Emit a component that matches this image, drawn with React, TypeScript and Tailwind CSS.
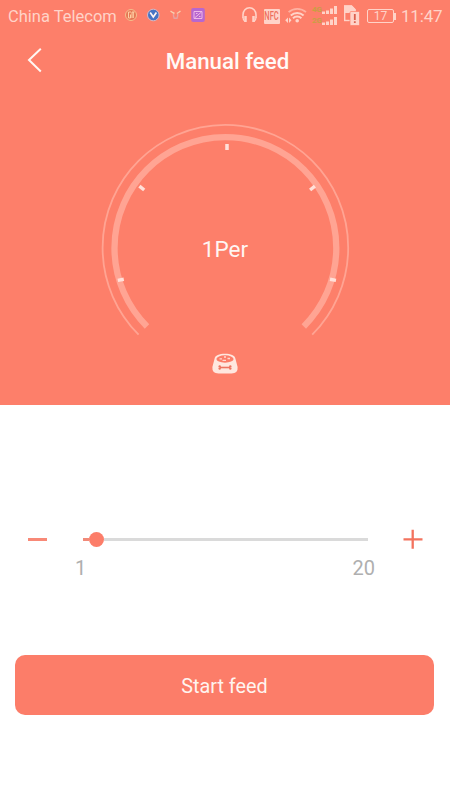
import React from "react";

function StatusBar() {
  return (
    <div className="flex h-8 items-center pl-2 text-[#ffd3c8]">
      <span className="w-[117px] shrink-0 whitespace-nowrap pt-px text-[16.5px] leading-8">China Telecom</span>
      <svg className="shrink-0" width="12" height="32" viewBox="0 0 12 32" fill="none">
        <circle cx="6" cy="15" r="5.5" fill="#e57755" stroke="#f5bf8d" />
        <path d="M6 12H3.5V18H5.5V14.5M7 18V12H9.5M8.3 12V18" stroke="#ffd0a4" />
      </svg>
      <svg className="ml-[10px] shrink-0" width="13" height="32" viewBox="0 0 13 32" fill="none">
        <circle cx="6.3" cy="15" r="5.8" fill="#4674c4" stroke="#d4b9c6" />
        <path d="M3.2 12.5L6.3 17L9.4 12.5" stroke="#fff5f1" strokeWidth="1.7" />
      </svg>
      <svg className="ml-[10px] shrink-0" width="12" height="32" viewBox="0 0 12 32" fill="none">
        <path d="M.5 11L2.5 12.5L4.5 13.5M10.5 11L8.5 12.5L6.8 13.5" stroke="#f8cfae" strokeWidth="1.4" />
        <path d="M3.5 14V16L4.2 18.3H7L7.7 16V14" stroke="#e7a2a0" strokeWidth="1.4" />
      </svg>
      <svg className="ml-[9px] shrink-0" width="14" height="32" viewBox="0 0 14 32" fill="none">
        <rect x=".2" y="8" width="13.6" height="14" rx="2" fill="#b767cf" />
        <path d="M3 11.5H11V18.5H3ZM3.5 18L10.5 12M5 13.5H6.5M8 16.5H9.5" stroke="#efb8e7" />
      </svg>
      <svg className="ml-[36px] shrink-0" width="17" height="32" viewBox="0 0 17 32" fill="none" stroke="currentColor">
        <path d="M2 18V14.8A6 6.5 0 0 1 15 14.8V18" strokeWidth="1.6" />
        <path d="M4.5 16V22M12.5 16V22" strokeWidth="2.5" />
        <path d="M2 17.5Q2 20 4 21.5M15 17.5Q15 20 13 21.5" strokeWidth="1.3" />
      </svg>
      <span className="ml-[6px] flex h-[15px] w-[16px] shrink-0 items-center justify-center rounded-[1px] bg-[#ffd3c8] text-[#ee6f5c]">
        <span className="scale-x-[.68] scale-y-110 text-[11px] font-medium leading-none">NFC</span>
      </span>
      <svg className="ml-[5px] shrink-0" width="23" height="32" viewBox="0 0 23 32" fill="none" stroke="currentColor">
        <path d="M3.6 12.2A13 13 0 0 1 21 12.2" strokeWidth="1.8" opacity=".6" />
        <path d="M5.8 15.4A9.5 9.5 0 0 1 18.6 15.4M8 18.2A6 6 0 0 1 16.4 18.2" strokeWidth="2" />
        <circle cx="12.2" cy="20.8" r="1.8" fill="currentColor" stroke="none" />
        <path d="M.2 20.3L3 17.6V23ZM4 17.6V23L6.5 20.3Z" fill="currentColor" stroke="none" />
      </svg>
      <div className="ml-[4px] flex w-[26px] shrink-0 flex-col">
        <div className="flex h-[11px] items-start">
          <span className="w-[10px] text-[8px] font-bold leading-[9px] text-[#c79f43]">4G</span>
          <span className="pt-px"><Bars /></span>
        </div>
        <div className="flex h-[11px] items-start">
          <span className="w-[10px] text-[8px] font-bold leading-[9px] text-[#c79f43]">2G</span>
          <span className="pt-px"><Bars /></span>
        </div>
      </div>
      <svg className="ml-[5px] shrink-0" width="18" height="32" viewBox="0 0 18 32" fill="none">
        <path d="M1.7 20.5V6H8.5L12 9.5V12" stroke="currentColor" strokeWidth="1.4" />
        <path d="M1 5.5H8.8L12.6 9.5V13H1Z" fill="currentColor" />
        <path d="M1 20.5H7" stroke="currentColor" strokeWidth="1.4" />
        <rect x="7" y="11.5" width="9.5" height="14" rx="1" fill="currentColor" stroke="#fd7f6a" strokeWidth=".7" />
        <path d="M11.8 14V20M11.8 21.3V23" stroke="#dc614e" strokeWidth="1.8" />
      </svg>
      <div className="ml-[6px] flex shrink-0 items-center">
        <span className="flex h-[14px] w-[27px] items-center justify-center rounded-[2px] border border-[#ffd3c8] text-[12px] leading-none">17</span>
        <span className="h-[7px] w-[2px] bg-[#ffd3c8]" />
      </div>
      <span className="ml-[5px] text-[17px] leading-8 tracking-[-0.2px]">11:47</span>
    </div>
  );
}

function Bars() {
  return (
    <svg width="15" height="8" viewBox="0 0 15 8" fill="currentColor">
      <path d="M0 5.5H3V8H0ZM4 4.5H7V8H4ZM8 2.5H11V8H8ZM12 0H15V8H12Z" />
    </svg>
  );
}

function Gauge() {
  return (
    <div className="grid h-[250px] w-[250px] place-items-center">
      <svg className="col-start-1 row-start-1" width="250" height="250" viewBox="100 90 250 250" fill="none">
        <path d="M138.6 334.6A122.8 122.8 0 1 1 312.2 334.6" stroke="#ffa493" strokeWidth="1.8" />
        <path d="M147 326.4A110.9 110.9 0 1 1 303.8 326.4" stroke="#ffa493" strokeWidth="6.3" />
        <g stroke="#ffe0d9" strokeWidth="3.5">
          <path d="M227 144V150" />
          <path d="M139.4 186.2L144.2 190" />
          <path d="M314.9 186.2L310.1 190" />
          <path d="M117.8 280.4L123.8 279.3" />
          <path d="M330 279.3L336 280.4" />
        </g>
      </svg>
      <span className="col-start-1 row-start-1 pt-[67px] text-[22.5px] leading-7 text-[#fff6f3]">1Per</span>
    </div>
  );
}

function Bowl() {
  return (
    <svg width="28" height="24" viewBox="0 0 28 24" fill="none">
      <path d="M3.5 7C3.8 3.2 8.5 1.8 14 1.8S24.2 3.2 24.5 7L26.6 15Q27.2 21.4 20.5 21.6H7.5Q.8 21.4 1.4 15Z" fill="#ffe7df" />
      <ellipse cx="14" cy="7" rx="8.6" ry="3.7" fill="#fc7d69" />
      <path d="M8.5 6.8H11M13 5H15M16.5 6.5H19M11.5 8.3H15" stroke="#ffd9cf" strokeWidth="1.3" />
      <path d="M9 15.5H19" stroke="#ee7562" strokeWidth="1.6" />
      <g fill="#ee7562">
        <circle cx="8.7" cy="14.4" r="1.2" />
        <circle cx="8.7" cy="16.6" r="1.2" />
        <circle cx="19.3" cy="14.4" r="1.2" />
        <circle cx="19.3" cy="16.6" r="1.2" />
      </g>
    </svg>
  );
}

export default function App() {
  return (
    <div className="flex h-[800px] w-[450px] flex-col overflow-hidden bg-white font-['Roboto',sans-serif]">
      <header className="flex h-[405px] shrink-0 flex-col bg-[#fd7f6a]">
        <StatusBar />
        <div className="grid h-[58px] grid-cols-[75px_1fr_75px] items-center">
          <button className="pb-[2px] pl-[26px]" aria-label="Back">
            <svg width="18" height="26" viewBox="0 0 18 26" fill="none">
              <path d="M14.8 1.8L3 13L14.8 24.5" stroke="#fff7f3" strokeWidth="2" />
            </svg>
          </button>
          <h1 className="pb-px pl-[5px] text-center text-[22.3px] font-medium leading-7 text-[#fffaf7]">Manual feed</h1>
        </div>
        <main className="flex flex-col items-center">
          <Gauge />
          <div className="pt-[12px]"><Bowl /></div>
        </main>
      </header>
      <section className="flex h-[250px] shrink-0 flex-col pt-[119px]">
        <div className="flex h-[30px] items-center pl-[28px]">
          <button aria-label="Decrease" className="h-[3px] w-[19px] bg-[#f88977]" />
          <div className="ml-[36px] flex w-[285px] items-center">
            <span className="h-[3px] w-[6px] bg-[#f18a79]" />
            <span className="h-[15px] w-[15px] rounded-full bg-[#fc7d69]" />
            <span className="h-[3px] flex-1 bg-[#dadada]" />
          </div>
          <button className="ml-[35px]" aria-label="Increase">
            <svg width="20" height="20" viewBox="0 0 20 20" stroke="#f3735e" strokeWidth="2.3">
              <path d="M.5 10.4H19.5M9.7 .7V19.7" />
            </svg>
          </button>
        </div>
        <div className="flex justify-between pl-[75px] pr-[75px] text-[20px] leading-7 text-[#afafaf]">
          <span>1</span><span>20</span>
        </div>
      </section>
      <button className="mx-[15px] h-[60px] w-[419px] rounded-[10px] bg-[#fc7d69] pt-[3px] text-[19.8px] leading-7 text-[#fff4ef]">Start feed</button>
    </div>
  );
}
